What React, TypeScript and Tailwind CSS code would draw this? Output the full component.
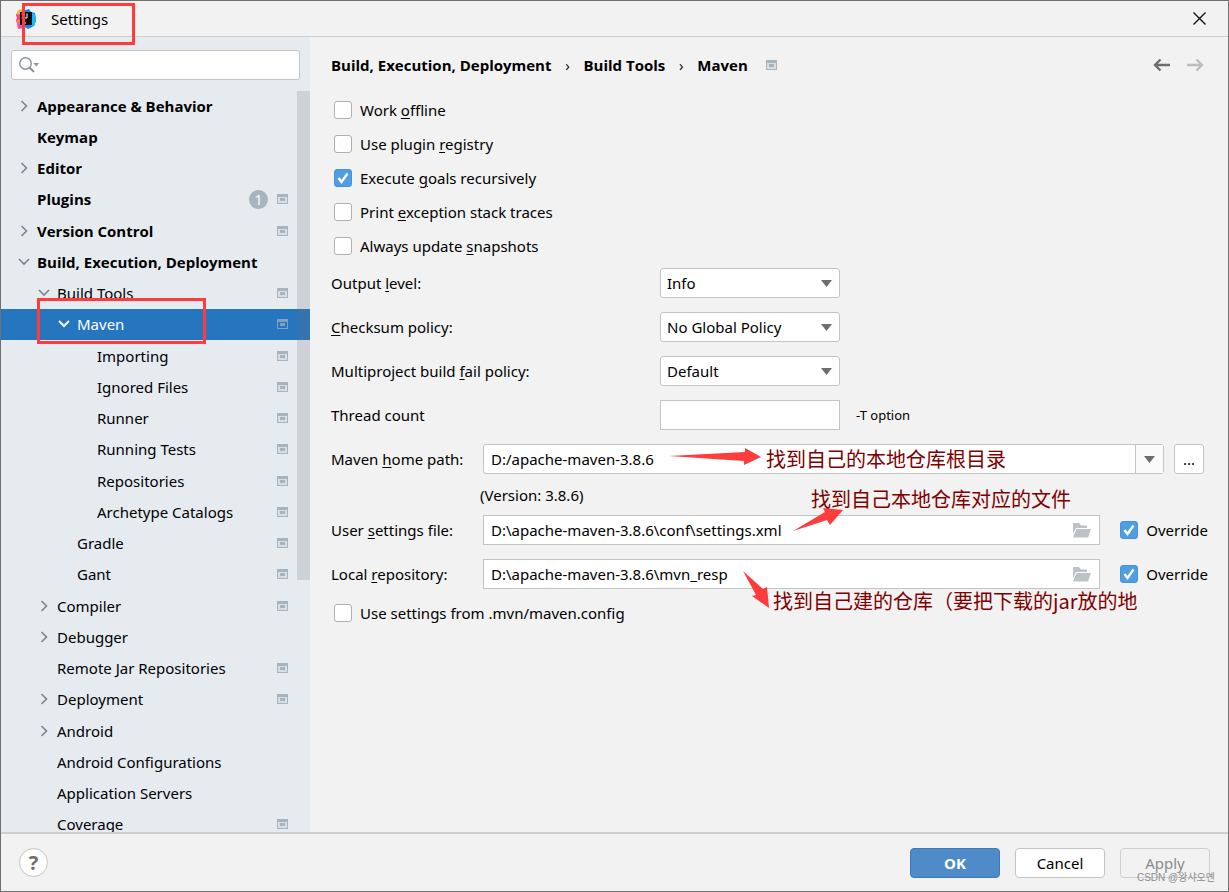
import { ReactNode, useState } from "react";

type TreeItem = {
  label: string;
  level: 0 | 1 | 2 | 3;
  state?: "open" | "closed";
  project?: boolean;
  badge?: number;
};

const tree: TreeItem[] = [
  { label: "Appearance & Behavior", level: 0, state: "closed" },
  { label: "Keymap", level: 0 },
  { label: "Editor", level: 0, state: "closed" },
  { label: "Plugins", level: 0, project: true, badge: 1 },
  { label: "Version Control", level: 0, state: "closed", project: true },
  { label: "Build, Execution, Deployment", level: 0, state: "open" },
  { label: "Build Tools", level: 1, state: "open", project: true },
  { label: "Maven", level: 2, state: "open", project: true },
  { label: "Importing", level: 3, project: true },
  { label: "Ignored Files", level: 3, project: true },
  { label: "Runner", level: 3, project: true },
  { label: "Running Tests", level: 3, project: true },
  { label: "Repositories", level: 3, project: true },
  { label: "Archetype Catalogs", level: 3, project: true },
  { label: "Gradle", level: 2, project: true },
  { label: "Gant", level: 2, project: true },
  { label: "Compiler", level: 1, state: "closed", project: true },
  { label: "Debugger", level: 1, state: "closed" },
  { label: "Remote Jar Repositories", level: 1, project: true },
  { label: "Deployment", level: 1, state: "closed", project: true },
  { label: "Android", level: 1, state: "closed" },
  { label: "Android Configurations", level: 1 },
  { label: "Application Servers", level: 1 },
  { label: "Coverage", level: 1, project: true },
];

const indent = ["pl-[15px]", "pl-[35px]", "pl-[55px]", "pl-[75px]"];

function AppIcon() {
  return (
    <svg width="20" height="20" viewBox="0 0 20 20" aria-hidden="true">
      <path d="M2 1l4-1 2 4-2 4-5 1-1-3z" fill="#fdb04a" />
      <path d="M0 5l5 1v8l-4 1-1-4 1-2z" fill="#fb3f7c" />
      <path d="M1 11l4-1v3l-4 1z" fill="#fd8a3a" />
      <path d="M1 15l5-1 2 5-6 1z" fill="#f94fa0" />
      <path d="M6 2l7-2 2 3 4 1 1 8-2 5-6 3-5-3z" fill="#0d86f2" />
      <path d="M15 4l4 1 1 5-2 7-3 0z" fill="#17b9fb" />
      <rect x="4" y="3" width="12" height="13" fill="#0a0a0f" />
      <path d="M5.500 5h2.500M6.750 5v4M5.500 9h2.500M11 4.500v4.500H9" stroke="#fff" fill="none" />
      <path d="M6 14h4" stroke="#fff" />
    </svg>
  );
}

function ProjectIcon({ dim }: { dim?: boolean }) {
  return (
    <svg width="11" height="10" viewBox="0 0 11 10" aria-hidden="true" className={dim ? "opacity-70" : ""}>
      <path d="M0 0h11v10H0zM1 3v6h9V3z" fill="#a8b4bd" fillRule="evenodd" />
      <rect x="1" y="3" width="9" height="6" fill={dim ? "#2675bf" : "#d8dfe4"} />
      <rect x="3" y="4" width="5" height="3" fill="#a8b4bd" />
    </svg>
  );
}

function Chevron({ open, light }: { open: boolean; light?: boolean }) {
  return (
    <svg width="16" height="16" viewBox="0 0 16 16" fill="none" aria-hidden="true">
      <path
        d={open ? "M3 5l5 5 5-5" : "M5.500 3l5 5-5 5"}
        stroke={light ? "#fff" : "#7f8387"}
        strokeWidth={light ? 2 : 1.6}
      />
    </svg>
  );
}

function Triangle() {
  return (
    <svg width="11" height="7" viewBox="0 0 11 7" aria-hidden="true">
      <path d="M0 0h11L5.500 7z" fill="#6e6e6e" />
    </svg>
  );
}

function FolderIcon() {
  return (
    <svg width="19" height="15" viewBox="0 0 19 15" aria-hidden="true">
      <path d="M1 0h6l2 2.500h6V5H4L1 11z" fill="#bcc3c8" />
      <path d="M4.500 6H19l-3 8.500H1z" fill="#bcc3c8" />
    </svg>
  );
}

// Underlines the keyboard mnemonic, marked by "_" before the letter
function Mnemonic({ text }: { text: string }) {
  const at = text.indexOf("_");
  if (at < 0) return <>{text}</>;
  return (
    <>
      {text.slice(0, at)}
      <u className="underline-offset-2">{text[at + 1]}</u>
      {text.slice(at + 2)}
    </>
  );
}

function Check({ label, defaultChecked = false }: { label: string; defaultChecked?: boolean }) {
  const [checked, setChecked] = useState(defaultChecked);
  return (
    <label className="inline-flex items-center gap-2 whitespace-nowrap">
      <span className="relative flex">
        <input
          type="checkbox"
          checked={checked}
          onChange={(e) => setChecked(e.target.checked)}
          className="size-[18px] appearance-none rounded-[3px] border border-[#b0b0b0] bg-white checked:border-[#4a90d9] checked:bg-[#4f9ee3]"
        />
        {checked && (
          <svg width="18" height="18" viewBox="0 0 18 18" fill="none" aria-hidden="true" className="pointer-events-none absolute inset-0">
            <path d="M4.500 9l3 4 6-8.500" stroke="#fff" strokeWidth="2.400" />
          </svg>
        )}
      </span>
      <span>
        <Mnemonic text={label} />
      </span>
    </label>
  );
}

function SelectRow({ id, label, options }: { id: string; label: string; options: string[] }) {
  return (
    <div className="flex items-center">
      <label htmlFor={id} className="w-[329px]">
        <Mnemonic text={label} />
      </label>
      <div className="relative w-[180px]">
        <select id={id} className="block h-[30px] w-full appearance-none rounded-[3px] border border-[#c4c4c4] bg-white px-[6px]">
          {options.map((o) => (
            <option key={o}>{o}</option>
          ))}
        </select>
        <span className="pointer-events-none absolute inset-y-0 right-2 flex items-center">
          <Triangle />
        </span>
      </div>
    </div>
  );
}

function FileRow({ id, label, value }: { id: string; label: string; value: string }) {
  return (
    <div className="flex items-center">
      <label htmlFor={id} className="w-[152px] shrink-0">
        <Mnemonic text={label} />
      </label>
      <div className="flex h-[30px] min-w-0 flex-1 items-center border border-[#c4c4c4] bg-white pr-2">
        <input id={id} defaultValue={value} className="min-w-0 flex-1 px-[7px] outline-none" />
        <button type="button" aria-label="Browse">
          <FolderIcon />
        </button>
      </div>
      <div className="ml-5 flex">
        <Check label="Override" defaultChecked />
      </div>
    </div>
  );
}

function Note({ className, children }: { className: string; children: ReactNode }) {
  return (
    <p className={`pointer-events-none absolute whitespace-nowrap font-['Noto_Sans_CJK_SC',sans-serif] text-[20px] leading-6 text-[#7f0000] ${className}`}>
      {children}
    </p>
  );
}

function Sidebar() {
  const [selected, setSelected] = useState("Maven");
  return (
    <aside className="relative flex w-[309px] shrink-0 flex-col overflow-hidden bg-[#e6ebf0]">
      <div className="mx-[10px] mt-[13px] flex h-[30px] shrink-0 items-center gap-1 rounded-[3px] border border-[#c4c4c4] bg-white pl-[7px]">
        <svg width="21" height="16" viewBox="0 0 21 16" fill="none" aria-hidden="true">
          <circle cx="6.500" cy="6.500" r="5.750" stroke="#8a9299" strokeWidth="1.400" />
          <path d="M10.500 10.500l4.500 4.500" stroke="#8a9299" strokeWidth="2" />
          <path d="M14.500 6H20l-2.750 3.500z" fill="#8a9299" />
        </svg>
        <input aria-label="Search settings" className="min-w-0 flex-1 outline-none" />
      </div>
      <ul className="mt-[10px] grid h-[750px] shrink-0 auto-rows-fr">
        {tree.map((item) => {
          const active = item.label === selected;
          return (
            <li key={item.label} className="relative">
              <button
                type="button"
                onClick={() => setSelected(item.label)}
                className={`flex h-full w-full items-center pr-[22px] text-left ${indent[item.level]} ${
                  active ? "bg-[#2675bf] text-white" : ""
                } ${item.level === 0 ? "font-['Open_Sans','Noto_Sans',sans-serif] font-bold" : ""}`}
              >
                <span className="mr-[5px] w-4">
                  {item.state && <Chevron open={item.state === "open"} light={active} />}
                </span>
                <span className="flex-1 whitespace-nowrap">{item.label}</span>
                {item.badge && (
                  <span className="mr-[9px] size-[19px] rounded-full bg-[#a9b5be] text-center font-normal leading-[19px] text-white">
                    {item.badge}
                  </span>
                )}
                {item.project && <ProjectIcon dim={active} />}
              </button>
              {item.label === "Maven" && (
                <span className="pointer-events-none absolute -top-[11px] left-9 z-10 h-[46px] w-[169px] border-3 border-[#ff3b3b]" />
              )}
            </li>
          );
        })}
      </ul>
      <div className="absolute right-0 top-[54px] h-[489px] w-[13px] bg-[#707070]/20" />
    </aside>
  );
}

function Content() {
  return (
    <main className="relative min-w-0 flex-1 pl-[21px] pr-5">
      <div className="flex h-[56px] items-center justify-between">
        <nav aria-label="Breadcrumb" className="flex items-center font-['Open_Sans','Noto_Sans',sans-serif] font-bold">
          <span>Build, Execution, Deployment</span>
          <span className="w-8 text-center font-medium">›</span>
          <span>Build Tools</span>
          <span className="w-8 text-center font-medium">›</span>
          <span className="mr-[18px]">Maven</span>
          <ProjectIcon />
        </nav>
        <div className="flex gap-[17px] pr-1">
          <button type="button" aria-label="Back">
            <svg width="17" height="14" viewBox="0 0 17 14" fill="none" stroke="#6e6e6e" strokeWidth="2.400" aria-hidden="true">
              <path d="M17 7H2M7.500 1.500L2 7l5.500 5.500" />
            </svg>
          </button>
          <button type="button" aria-label="Forward" disabled>
            <svg width="17" height="14" viewBox="0 0 17 14" fill="none" stroke="#bdbdbd" strokeWidth="2.400" aria-hidden="true">
              <path d="M0 7h15M9.500 1.500L15 7l-5.500 5.500" />
            </svg>
          </button>
        </div>
      </div>

      <div className="grid auto-rows-[34px] items-center justify-items-start pl-[3px]">
        <Check label="Work _offline" />
        <Check label="Use plugin _registry" />
        <Check label="Execute _goals recursively" defaultChecked />
        <Check label="Print _exception stack traces" />
        <Check label="Always update _snapshots" />
      </div>

      <div className="mt-[5px] flex flex-col gap-[14px]">
        <SelectRow id="output" label="Output _level:" options={["Info", "Debug", "Warn"]} />
        <SelectRow id="checksum" label="_Checksum policy:" options={["No Global Policy", "Fail", "Warn"]} />
        <SelectRow id="fail" label="Multiproject build _fail policy:" options={["Default", "Fail Fast", "Never Fail"]} />
        <div className="flex items-center">
          <label htmlFor="threads" className="w-[329px]">
            Thread count
          </label>
          <input id="threads" className="h-[30px] w-[180px] border border-[#c4c4c4] bg-white px-[7px]" />
          <span className="ml-4 text-[13px]">-T option</span>
        </div>
        <div className="flex items-center">
          <label htmlFor="home" className="w-[152px] shrink-0">
            <Mnemonic text="Maven _home path:" />
          </label>
          <div className="flex h-[30px] min-w-0 flex-1 rounded-[3px] border border-[#c4c4c4] bg-white">
            <input id="home" defaultValue="D:/apache-maven-3.8.6" className="min-w-0 flex-1 px-[7px] outline-none" />
            <button type="button" aria-label="Show paths" className="flex w-7 items-center justify-center border-l border-[#c4c4c4] bg-[#fafafa]">
              <Triangle />
            </button>
          </div>
          <button type="button" aria-label="Browse" className="ml-[10px] mr-1 h-[30px] w-[30px] rounded-[3px] border border-[#c4c4c4] bg-white">
            ...
          </button>
        </div>
      </div>

      <p className="flex h-[41px] items-center pl-[149px]">(Version: 3.8.6)</p>
      <div className="flex flex-col gap-[14px]">
        <FileRow id="user-settings" label="User _settings file:" value="D:\apache-maven-3.8.6\conf\settings.xml" />
        <FileRow id="local-repo" label="Local _repository:" value="D:\apache-maven-3.8.6\mvn_resp" />
      </div>
      <div className="flex h-[48px] items-center pl-[3px]">
        <Check label="Use settings from .mvn/maven.config" />
      </div>

      {/* Hand-drawn notes over the form */}
      <svg width="190" height="170" viewBox="0 0 190 170" fill="#ff3b3b" aria-hidden="true" className="pointer-events-none absolute left-[350px] top-[403px]">
        <path d="M9 16l76-4v-4l16 9-17 8v-4z" />
        <path d="M133 91l32-19-2-4 20 2-13 15-3-5z" />
        <path d="M83 131l20 18 4-2 2 21-17-12 4-1z" />
      </svg>
      <Note className="left-[456px] top-[410px]">找到自己的本地仓库根目录</Note>
      <Note className="left-[501px] top-[450px]">找到自己本地仓库对应的文件</Note>
      <Note className="left-[463px] top-[552px]">找到自己建的仓库（要把下载的jar放的地</Note>
    </main>
  );
}

export default function App() {
  return (
    <div className="flex h-screen flex-col overflow-hidden border border-[#707070] bg-[#f2f2f2] font-['Noto_Sans','Open_Sans',sans-serif] text-[15px] leading-5 text-black">
      <header className="relative flex h-9 shrink-0 items-center border-b border-[#cfcfcf] pl-[15px] pr-[22px]">
        <AppIcon />
        <h1 className="ml-[15px] flex-1">Settings</h1>
        <button type="button" aria-label="Close">
          <svg width="13" height="13" viewBox="0 0 13 13" stroke="#111" strokeWidth="1.400" aria-hidden="true">
            <path d="M.5.5l12 12M12.500.5l-12 12" />
          </svg>
        </button>
        <span className="pointer-events-none absolute left-[21px] top-[2px] z-10 h-[42px] w-[113px] border-3 border-[#ff3b3b]" />
      </header>

      <div className="flex min-h-0 flex-1">
        <Sidebar />
        <Content />
      </div>

      <footer className="relative flex h-[59px] shrink-0 items-center border-t-2 border-[#cfcfcf] pl-[18px] pr-[18px]">
        <button type="button" aria-label="Help" className="size-[29px] rounded-full border border-[#c4c4c4] bg-white text-[20px] font-bold text-[#6e6e6e]">
          ?
        </button>
        <div className="ml-auto flex gap-[15px]">
          <button type="button" className="h-[30px] w-[90px] rounded-[4px] border border-[#3f78b8] bg-[#4f8bc9] font-bold text-white">
            OK
          </button>
          <button type="button" className="h-[30px] w-[90px] rounded-[4px] border border-[#c4c4c4] bg-white">
            Cancel
          </button>
          <button type="button" disabled className="h-[30px] w-[90px] rounded-[4px] border border-[#cfcfcf] text-[#8c8c8c]">
            Apply
          </button>
        </div>
        <span className="absolute bottom-[5px] right-[13px] font-['Liberation_Sans','Noto_Sans_CJK_KR',sans-serif] text-[10px] leading-4 text-[#8c8c8c]">
          CSDN @왕샤오옌
        </span>
      </footer>
    </div>
  );
}
